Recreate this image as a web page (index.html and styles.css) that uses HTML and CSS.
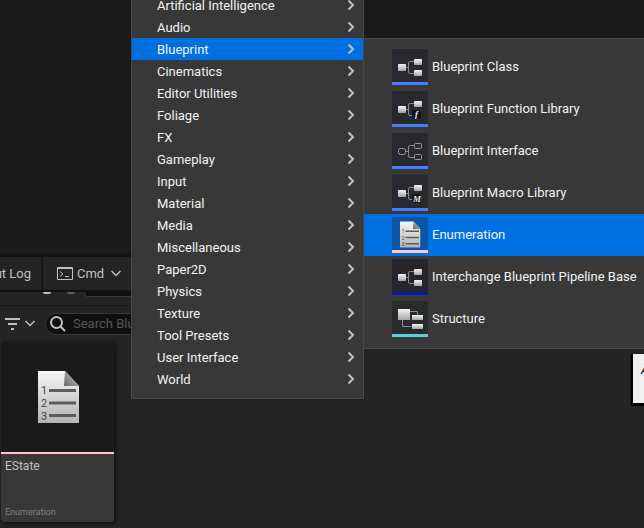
FILE: index.html
```
<!DOCTYPE html>
<html lang="en">
<head>
    <meta charset="UTF-8">
    <meta name="viewport" content="width=device-width, initial-scale=1.0">
    <title>Content Browser</title>
    <link rel="stylesheet" href="styles.css">
</head>
<body>
    <!-- Shared shapes -->
    <svg class="defs" aria-hidden="true">
        <defs>
            <linearGradient id="paper" x1="0" y1="0" x2="0" y2="1">
                <stop offset="0" stop-color="#f6f6f6"/>
                <stop offset="1" stop-color="#b4b4b4"/>
            </linearGradient>
            <linearGradient id="fold" x1="0" y1="1" x2="1" y2="0">
                <stop offset="0" stop-color="#666"/>
                <stop offset="1" stop-color="#ccc"/>
            </linearGradient>
            <linearGradient id="node" x1="0" y1="0" x2="0" y2="1">
                <stop offset="0" stop-color="#f4f4f4"/>
                <stop offset="1" stop-color="#a4a4a4"/>
            </linearGradient>
            <symbol id="icon-nodes" viewBox="0 0 36 33">
                <path d="M14 18.5h2.5M22 12.5h-4q-1.5 0-1.5 1.5v9q0 1.5 1.5 1.5h4" fill="none" stroke="#8a8a8a"/>
                <rect x="6" y="15" width="8" height="7" rx="1" fill="url(#node)"/>
                <rect x="22" y="10" width="8" height="6" rx="1" fill="url(#node)"/>
                <rect x="22" y="21" width="8" height="6" rx="1" fill="url(#node)"/>
            </symbol>
            <symbol id="icon-nodes-badge" viewBox="0 0 36 33">
                <path d="M14 18.5h2.5M22 12.5h-4q-1.5 0-1.5 1.5v9q0 1.5 1.5 1.5h4" fill="none" stroke="#8a8a8a"/>
                <rect x="6" y="15" width="8" height="7" rx="1" fill="url(#node)"/>
                <rect x="22" y="10" width="8" height="6" rx="1" fill="url(#node)"/>
                <rect x="20" y="19" width="9" height="9" rx="2" fill="#151517"/>
            </symbol>
            <symbol id="icon-nodes-outline" viewBox="0 0 36 33">
                <path d="M13.5 18.5h3M22.5 12.5h-4.5q-1.5 0-1.5 1.5v9q0 1.5 1.5 1.5h4.5" fill="none" stroke="#8a8a8a"/>
                <g fill="none" stroke="#999">
                    <rect x="6.5" y="15.5" width="7" height="6" rx="2"/>
                    <rect x="22.5" y="10.5" width="7" height="5" rx="1"/>
                    <rect x="22.5" y="21.5" width="7" height="5" rx="1"/>
                </g>
            </symbol>
            <symbol id="icon-enum" viewBox="0 0 42 54">
                <path d="M1 1h27l14 15v37H1z" fill="url(#paper)"/>
                <path d="M28 1l14 15H27z" fill="url(#fold)"/>
                <path d="M12 20.5h27M12 33h27M12 45.5h27" stroke="#5c5c5c" stroke-width="3"/>
            </symbol>
            <symbol id="icon-struct" viewBox="0 0 36 33">
                <path d="M18 10.5h7.5v4M10.5 19v6.5h9" fill="none" stroke="#8a8a8a"/>
                <rect x="6" y="8" width="12" height="11" fill="url(#node)"/>
                <rect x="20" y="14" width="11" height="5" fill="url(#node)"/>
                <rect x="20" y="23" width="11" height="5" fill="url(#node)"/>
            </symbol>
            <symbol id="icon-right" viewBox="0 0 8 12">
                <path d="M1.5 1.5l4.5 4.5-4.5 4.5" fill="none" stroke="#c0c0c0" stroke-width="2"/>
            </symbol>
            <symbol id="icon-down" viewBox="0 0 10 7">
                <path d="M.5 1l4.5 4.5 4.5-4.5" fill="none" stroke="#c0c0c0" stroke-width="1.5"/>
            </symbol>
        </defs>
    </svg>

    <div class="editor">
        <div class="viewport"></div>

        <!-- Status Bar -->
        <div class="statusbar">
            <button class="tab log">Output Log</button>
            <button class="tab cmd">
                <svg width="16" height="13" viewBox="0 0 16 13"><path d="M.5.5h15v12H.5zM0 1.5h16" fill="none" stroke="#c0c0c0"/><path d="M3 4.5l3 2.5-3 2.5M8 9.5h4" fill="none" stroke="#c0c0c0"/></svg>
                <span>Cmd</span>
                <svg class="down" width="10" height="7"><use href="#icon-down"/></svg>
            </button>
        </div>

        <!-- Content Browser -->
        <div class="browser">
            <div class="navigation">
                <span class="dot"></span>
                <span class="dot dim"></span>
                <span class="path"></span>
            </div>
            <div class="filters">
                <button class="filter" aria-label="Filters">
                    <svg width="15" height="12" viewBox="0 0 15 12"><path d="M0 1h15M3 6h9M6 11h3" stroke="#c0c0c0" stroke-width="2"/></svg>
                    <svg width="10" height="7"><use href="#icon-down"/></svg>
                </button>
                <label class="search">
                    <svg width="16" height="16" viewBox="0 0 16 16"><circle cx="6.5" cy="6.5" r="5.5" fill="none" stroke="#c0c0c0" stroke-width="2"/><path d="M10.5 10.5l4.5 4.5" stroke="#c0c0c0" stroke-width="2"/></svg>
                    <input type="text" placeholder="Search Blueprints" aria-label="Search Blueprints">
                </label>
            </div>
            <div class="assets">
                <div class="asset">
                    <div class="thumb">
                        <svg width="42" height="54" viewBox="0 0 42 54">
                            <use href="#icon-enum"/>
                            <g class="digits"><text x="4" y="24">1</text><text x="4" y="37">2</text><text x="4" y="50">3</text></g>
                        </svg>
                    </div>
                    <div class="info">
                        <span class="name">EState</span>
                        <span class="type">Enumeration</span>
                    </div>
                </div>
            </div>
        </div>
    </div>

    <!-- Create Menu -->
    <div class="menu" role="menu">
        <button>Artificial Intelligence<svg><use href="#icon-right"/></svg></button>
        <button>Audio<svg><use href="#icon-right"/></svg></button>
        <button class="active">Blueprint<svg><use href="#icon-right"/></svg></button>
        <button>Cinematics<svg><use href="#icon-right"/></svg></button>
        <button>Editor Utilities<svg><use href="#icon-right"/></svg></button>
        <button>Foliage<svg><use href="#icon-right"/></svg></button>
        <button>FX<svg><use href="#icon-right"/></svg></button>
        <button>Gameplay<svg><use href="#icon-right"/></svg></button>
        <button>Input<svg><use href="#icon-right"/></svg></button>
        <button>Material<svg><use href="#icon-right"/></svg></button>
        <button>Media<svg><use href="#icon-right"/></svg></button>
        <button>Miscellaneous<svg><use href="#icon-right"/></svg></button>
        <button>Paper2D<svg><use href="#icon-right"/></svg></button>
        <button>Physics<svg><use href="#icon-right"/></svg></button>
        <button>Texture<svg><use href="#icon-right"/></svg></button>
        <button>Tool Presets<svg><use href="#icon-right"/></svg></button>
        <button>User Interface<svg><use href="#icon-right"/></svg></button>
        <button>World<svg><use href="#icon-right"/></svg></button>
    </div>

    <!-- Blueprint Submenu -->
    <div class="submenu" role="menu">
        <button><span class="icon"><svg><use href="#icon-nodes"/></svg></span>Blueprint Class</button>
        <button><span class="icon"><svg><use href="#icon-nodes-badge"/><text x="23" y="26">f</text></svg></span>Blueprint Function Library</button>
        <button><span class="icon"><svg><use href="#icon-nodes-outline"/></svg></span>Blueprint Interface</button>
        <button><span class="icon"><svg><use href="#icon-nodes-badge"/><text x="21" y="27">M</text></svg></span>Blueprint Macro Library</button>
        <button class="active"><span class="icon enum"><svg viewBox="-15 -8 72 66"><use href="#icon-enum" width="42" height="54"/><g class="digits"><text x="4" y="24">1</text><text x="4" y="37">2</text><text x="4" y="50">3</text></g></svg></span>Enumeration</button>
        <button><span class="icon pipeline"><svg><use href="#icon-nodes"/></svg></span>Interchange Blueprint Pipeline Base</button>
        <button><span class="icon struct"><svg><use href="#icon-struct"/></svg></span>Structure</button>
    </div>

    <div class="tooltip" role="tooltip">A</div>
</body>
</html>
```

FILE: styles.css
```
* {
    box-sizing: border-box;
}
body, html {
    margin: 0;
    height: 100%;
    overflow: hidden;
    font-family: Roboto, sans-serif;
    font-size: 13px;
    color: #c0c0c0;
    background: #242424;
}
button {
    margin: 0;
    padding: 0;
    border: none;
    background: none;
    font: inherit;
    color: inherit;
    text-align: left;
}
svg {
    flex-shrink: 0;
}
.defs {
    position: absolute;
    width: 0;
    height: 0;
}
.editor {
    display: flex;
    flex-direction: column;
    height: 100vh;
}
.viewport {
    flex: 1;
    background: #1a1a1a;
}
.statusbar {
    display: flex;
    border-top: 4px solid #151515;
    border-bottom: 2px solid #111;
    background: #242424;
}
.tab {
    display: flex;
    align-items: center;
    height: 33px;
}
.log {
    width: 43px;
    padding-right: 10px;
    justify-content: flex-end;
    border-right: 2px solid #151515;
    white-space: nowrap;
}
.cmd {
    padding-left: 14px;
    gap: 4px;
}
.cmd .down {
    margin-left: 3px;
}

/* Content browser */
.navigation {
    display: flex;
    height: 14px;
    padding-left: 43px;
    border-bottom: 1px solid #1a1a1a;
}
.dot {
    width: 8px;
    height: 2px;
    margin-right: 16px;
    border-radius: 0 0 5px 5px;
    background: #c0c0c0;
}
.dot.dim {
    margin-right: 9px;
    background: #606060;
}
.path {
    flex: 1;
    height: 5px;
    border: 1px solid #383838;
    border-top: none;
    border-radius: 0 0 0 4px;
    background: #0f0f0f;
}
.filters {
    display: flex;
    align-items: center;
    gap: 10px;
    height: 35px;
    padding-left: 5px;
}
.filter {
    display: flex;
    align-items: center;
    gap: 5px;
}
.search {
    display: flex;
    align-items: center;
    gap: 7px;
    width: 300px;
    height: 22px;
    padding-left: 4px;
    border: 1px solid #383838;
    border-radius: 11px;
    background: #0f0f0f;
}
.search input {
    flex: 1;
    padding: 0;
    border: none;
    outline: none;
    background: none;
    font: inherit;
    color: #c0c0c0;
}
.search input::placeholder {
    color: #575757;
}
.assets {
    padding: 0 1px 6px;
}
.asset {
    width: 113px;
    border-radius: 4px;
    overflow: hidden;
    box-shadow: 2px 2px 4px #111;
}
.thumb {
    display: flex;
    align-items: center;
    justify-content: center;
    height: 113px;
    border-bottom: 2px solid #ffc8c8;
    background: #1a1a1a;
}
.digits {
    font-size: 11px;
    fill: #444;
}
.info {
    display: flex;
    flex-direction: column;
    justify-content: space-between;
    height: 68px;
    padding: 4px;
    background: #383838;
}
.name {
    font-size: 12px;
    line-height: 16px;
}
.type {
    font-size: 9px;
    line-height: 12px;
    color: #808080;
}

/* Menus */
.menu, .submenu {
    position: absolute;
    border: 1px solid #484848;
    background: #383838;
    color: #f2f2f2;
}
.menu {
    top: -15px;
    left: 131px;
    width: 233px;
    padding: 8px 0;
}
.menu button {
    display: flex;
    align-items: center;
    justify-content: space-between;
    width: 100%;
    height: 22px;
    padding: 0 8px 0 25px;
}
.menu svg {
    width: 8px;
    height: 12px;
}
.submenu {
    top: 38px;
    left: 364px;
    right: 0;
    padding: 7px 0 8px;
    border-width: 1px 0;
}
.submenu button {
    display: flex;
    align-items: center;
    gap: 4px;
    width: 100%;
    height: 42px;
    padding-left: 28px;
    line-height: 16px;
    white-space: nowrap;
}
.menu .active, .submenu .active {
    background: #0070e0;
}
.icon {
    height: 36px;
    border-bottom: 3px solid #4080ff;
    background: #28292f;
}
.icon svg {
    display: block;
    width: 36px;
    height: 33px;
}
.icon svg > text {
    font: italic bold 9px "Liberation Serif", serif;
    fill: #e8e8e8;
}
.icon.enum {
    border-color: #ffc8c8;
    background: #0b56a8;
}
.icon.pipeline {
    border-color: #0a14b4;
    background: #25252b;
}
.icon.struct {
    border-color: #60d0d8;
    background: #272b2c;
}
.tooltip {
    position: absolute;
    top: 354px;
    left: 633px;
    height: 50px;
    padding: 8px;
    border-bottom: 1px solid #000;
    box-shadow: -1px 1px 1px 1px #000;
    background: #f0f0f0;
    color: #111;
    font-style: italic;
}
```
